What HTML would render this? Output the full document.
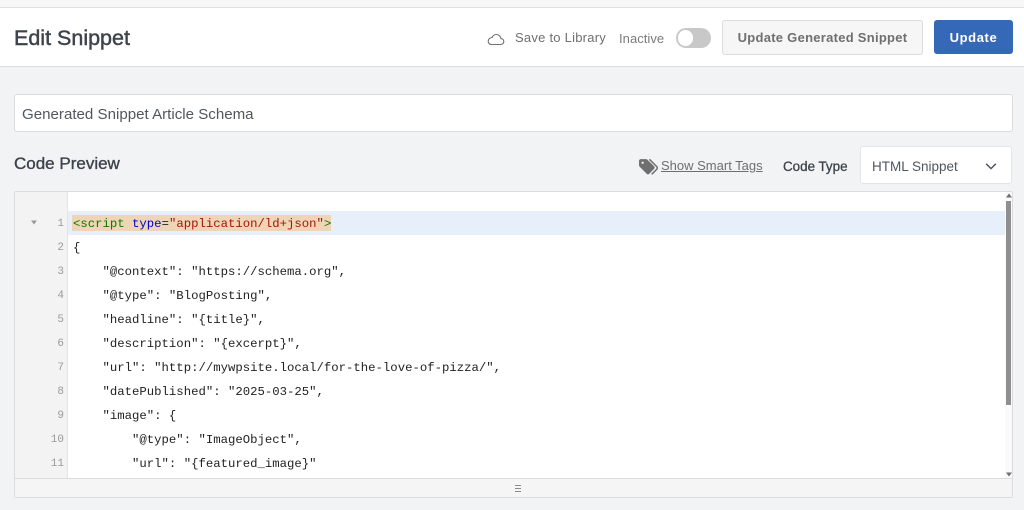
<!DOCTYPE html>
<html lang="en">
<head>
<meta charset="utf-8">
<title>Edit Snippet</title>
<style>
html,body{margin:0;padding:0;width:1024px;height:510px;overflow:hidden;background:#f2f3f5;font-family:"Liberation Sans",sans-serif}
.a{position:absolute;white-space:nowrap}
.box{position:absolute;box-sizing:border-box}
.ln{position:absolute;left:40px;width:24px;text-align:right;font:11px/24px "Liberation Mono",monospace;color:#9a9a9a;margin-top:1px}
.cl{position:absolute;left:73px;font:12.3px/24px "Liberation Mono",monospace;color:#222;white-space:pre;height:24px}
</style>
</head>
<body>
<div class="box" style="left:0;top:0;width:1024px;height:8px;background:#f7f7f7;border-bottom:1px solid #e0e0e0"></div>
<div class="box" style="left:0;top:8px;width:1024px;height:59px;background:#fff;border-bottom:1px solid #dcdcde"></div>

<div class="a" style="left:14px;top:24px;font-size:21.5px;line-height:28px;color:#3c434a;font-weight:400;-webkit-text-stroke:.45px #3c434a">Edit Snippet</div>

<svg class="a" style="left:487px;top:32px" width="18" height="14" viewBox="0 0 18 14"><path d="M4.5 12.5H13.5C15.4 12.5 16.8 11.2 16.8 9.5C16.8 7.9 15.6 6.7 14 6.6C13.6 4.2 11.7 2.5 9.4 2.5C7.4 2.5 5.8 3.7 5.1 5.5C3 5.6 1.2 7.2 1.2 9.2C1.2 11.1 2.6 12.5 4.5 12.5Z" fill="none" stroke="#6f6f6f" stroke-width="1.1"/></svg>
<div class="a" style="left:515px;top:29px;font-size:13px;line-height:17px;color:#6f6f6f;letter-spacing:.24px">Save to Library</div>
<div class="a" style="left:619px;top:30px;font-size:13px;line-height:17px;color:#7a7a7a;letter-spacing:.05px">Inactive</div>
<div class="box" style="left:676px;top:28px;width:35px;height:20px;border-radius:10px;background:#c8c8c8"></div>
<div class="box" style="left:678px;top:30px;width:15px;height:15.5px;border-radius:50%;background:#fff"></div>

<div class="box" style="left:722px;top:20px;width:201px;height:35px;border:1px solid #dcdcde;border-radius:3px;background:#f6f6f6;text-align:center;font-size:13px;line-height:34px;font-weight:700;color:#6f6f6f;letter-spacing:.27px">Update Generated Snippet</div>
<div class="box" style="left:934px;top:20px;width:79px;height:34px;border-radius:3px;background:#3568b7;text-align:center;font-size:13px;line-height:36px;font-weight:700;color:#fff;letter-spacing:.6px">Update</div>

<div class="box" style="left:14px;top:94px;width:999px;height:38px;background:#fff;border:1px solid #dcdcde;border-radius:3px"></div>
<div class="a" style="left:22px;top:106px;font-size:15.1px;line-height:18px;color:#50575e">Generated Snippet Article Schema</div>

<div class="a" style="left:14px;top:153px;font-size:17px;line-height:22px;color:#3c434a;-webkit-text-stroke:.35px #3c434a">Code Preview</div>

<svg class="a" style="left:638px;top:158px" width="21" height="18" viewBox="0 0 22 19"><path d="M1 3C1 2 1.8 1.2 2.8 1.2H8.5C9 1.2 9.5 1.4 9.9 1.8L17 8.9C17.7 9.6 17.7 10.7 17 11.4L11.7 16.7C11 17.4 9.9 17.4 9.2 16.7L1.6 9.1C1.2 8.7 1 8.2 1 7.7Z" fill="#6f6f6f"/><path d="M12 1.4L19.6 9C20.5 9.9 20.5 11.2 19.6 12L14.4 17.2" fill="none" stroke="#6f6f6f" stroke-width="1.6"/><circle cx="4.8" cy="5" r="1.2" fill="#f2f3f5"/></svg>
<div class="a" style="left:661px;top:157px;font-size:13px;line-height:17px;color:#6f6f6f;text-decoration:underline">Show Smart Tags</div>
<div class="a" style="left:783px;top:158px;font-size:13.4px;line-height:17px;color:#3c434a;-webkit-text-stroke:.3px #3c434a">Code Type</div>

<div class="box" style="left:860px;top:146px;width:152px;height:38px;background:#fff;border:1px solid #e4e5e7;border-radius:3px"></div>
<div class="a" style="left:872px;top:158px;font-size:13.5px;line-height:17px;color:#50575e">HTML Snippet</div>
<svg class="a" style="left:985px;top:162px" width="12" height="9" viewBox="0 0 12 9"><path d="M1.2 1.8L6 6.6L10.8 1.8" fill="none" stroke="#50575e" stroke-width="1.5"/></svg>

<div class="box" style="left:14px;top:191px;width:999px;height:307px;background:#fff;border:1px solid #dcdcde;border-radius:2px"></div>
<div class="box" style="left:15px;top:192px;width:53px;height:286px;background:#f3f3f3;border-right:1px solid #e3e3e3"></div>
<div class="box" style="left:68px;top:211px;width:937px;height:24px;background:#e6effa"></div>
<div class="box" style="left:72px;top:215px;width:259px;height:16px;background:#edd5b5"></div>
<div class="box" style="left:1005px;top:192px;width:7px;height:286px;background:#fafafa"></div>
<div class="box" style="left:1006px;top:201px;width:5px;height:204px;background:#8f8f8f"></div>
<svg class="a" style="left:1006px;top:193px" width="6" height="5" viewBox="0 0 6 5"><path d="M3 .5L6 4.5H0Z" fill="#6f6f6f"/></svg>
<svg class="a" style="left:1006px;top:472px" width="6" height="5" viewBox="0 0 6 5"><path d="M0 .5H6L3 4.5Z" fill="#6f6f6f"/></svg>
<div class="box" style="left:15px;top:478px;width:997px;height:19px;background:#f5f5f5;border-top:1px solid #dcdcde"></div>
<div class="box" style="left:515px;top:485px;width:6px;height:7px;border-top:1px solid #8a8a8a;border-bottom:1px solid #8a8a8a"></div>
<div class="box" style="left:515px;top:488px;width:6px;height:1px;background:#8a8a8a"></div>

<svg class="a" style="left:31px;top:220px" width="6" height="5" viewBox="0 0 6 5"><path d="M0 .5H6L3 4.5Z" fill="#9a9a9a"/></svg>

<div class="ln" style="top:211px">1</div>
<div class="ln" style="top:235px">2</div>
<div class="ln" style="top:259px">3</div>
<div class="ln" style="top:283px">4</div>
<div class="ln" style="top:307px">5</div>
<div class="ln" style="top:331px">6</div>
<div class="ln" style="top:355px">7</div>
<div class="ln" style="top:379px">8</div>
<div class="ln" style="top:403px">9</div>
<div class="ln" style="top:427px">10</div>
<div class="ln" style="top:451px">11</div>

<div class="cl" style="top:212px"><span style="color:#117700">&lt;script</span> <span style="color:#0000cc">type</span>=<span style="color:#aa1111">"application/ld+json"</span><span style="color:#117700">&gt;</span></div>
<div class="cl" style="top:236px">{</div>
<div class="cl" style="top:260px">    "@context": "https://schema.org",</div>
<div class="cl" style="top:284px">    "@type": "BlogPosting",</div>
<div class="cl" style="top:308px">    "headline": "{title}",</div>
<div class="cl" style="top:332px">    "description": "{excerpt}",</div>
<div class="cl" style="top:356px">    "url": "http://mywpsite.local/for-the-love-of-pizza/",</div>
<div class="cl" style="top:380px">    "datePublished": "2025-03-25",</div>
<div class="cl" style="top:404px">    "image": {</div>
<div class="cl" style="top:428px">        "@type": "ImageObject",</div>
<div class="cl" style="top:452px">        "url": "{featured_image}"</div>
</body>
</html>
